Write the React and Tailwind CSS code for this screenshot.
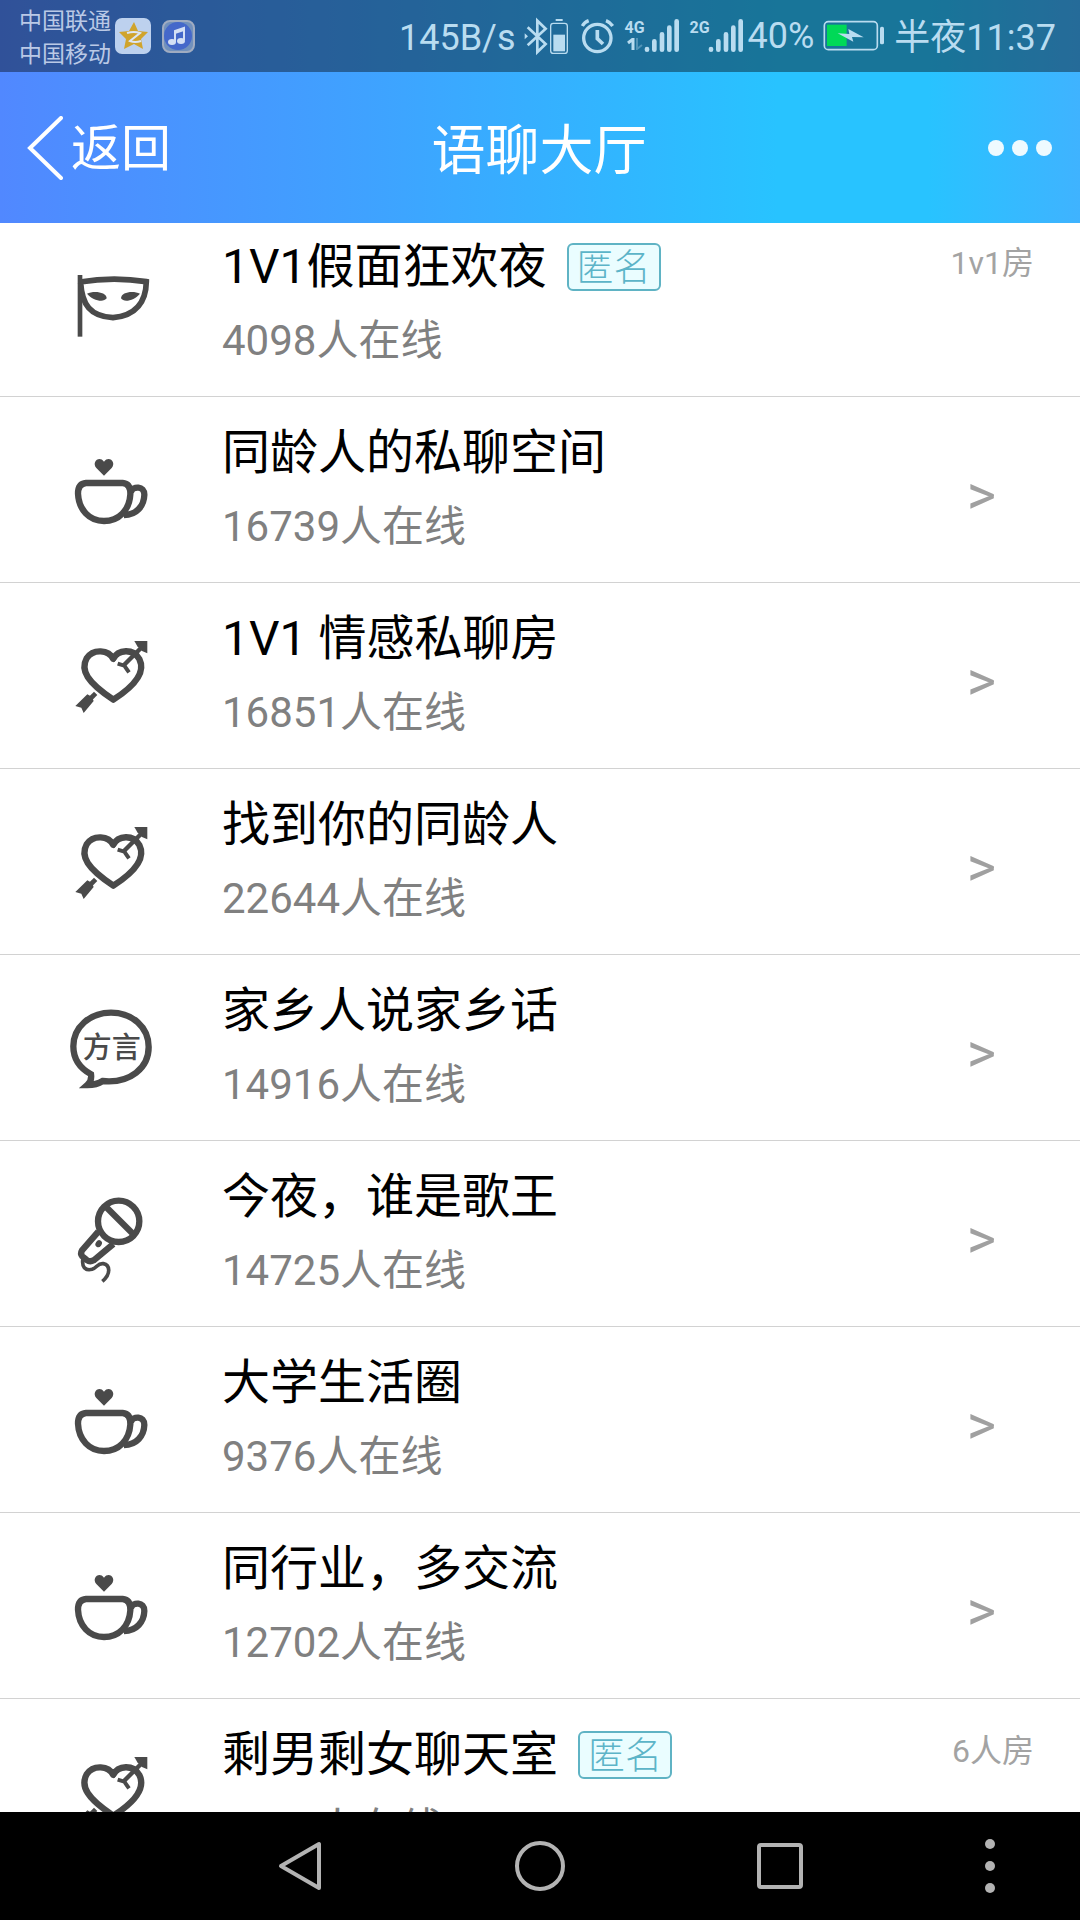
const rooms = [
  { icon: 'mask', title: '1V1假面狂欢夜', online: 4098, anonymous: true, type: '1v1房' },
  { icon: 'cup', title: '同龄人的私聊空间', online: 16739 },
  { icon: 'heart', title: '1V1 情感私聊房', online: 16851 },
  { icon: 'heart', title: '找到你的同龄人', online: 22644 },
  { icon: 'dialect', title: '家乡人说家乡话', online: 14916 },
  { icon: 'mic', title: '今夜，谁是歌王', online: 14725 },
  { icon: 'cup', title: '大学生活圈', online: 9376 },
  { icon: 'cup', title: '同行业，多交流', online: 12702 },
  { icon: 'heart', title: '剩男剩女聊天室', online: 8203, anonymous: true, type: '6人房' },
]

function MaskIcon() {
  return (
    <svg className="size-[130px] shrink-0" viewBox="30 54 390 390" fill="none" stroke="#4a4a4a" strokeWidth="14" aria-hidden="true">
      <path d="M120 162V347" />
      <path d="M120 183Q220 166 319 182C318 240 290 284 219 290C150 286 126 250 122 186" strokeWidth="17" />
      <path d="M141 218C160 208 200 212 200 232C190 246 158 238 141 218Z" fill="#4a4a4a" stroke="none" />
      <path d="M300 218C281 208 243 212 243 232C252 246 283 238 300 218Z" fill="#4a4a4a" stroke="none" />
    </svg>
  )
}

function CupIcon() {
  return (
    <svg className="size-[130px] shrink-0" viewBox="0 -18 390 390" fill="none" stroke="#4a4a4a" strokeWidth="19" aria-hidden="true">
      <path d="M162 134L139 111C124 94 147 72 162 92C177 72 200 94 185 111Z" fill="#4a4a4a" stroke="none" />
      <path d="M108 156H218Q242 158 241 190C238 238 206 270 162 270C118 270 86 236 84 188Q84 158 108 156Z" />
      <path d="M242 184C248 164 284 164 283 192C282 224 260 252 222 252" />
    </svg>
  )
}

function HeartIcon() {
  return (
    <svg className="size-[130px] shrink-0" viewBox="0 0 390 390" fill="none" stroke="#4a4a4a" strokeWidth="19" aria-hidden="true">
      <path d="M190 144C176 116 130 112 110 142C90 178 112 214 190 266C262 220 286 180 268 144C250 112 204 114 190 144Z" strokeLinejoin="round" />
      <path d="M197 157L212 140" stroke="#fff" strokeWidth="9" />
      <path d="M222 162L276 108" strokeWidth="13" />
      <path d="M203 158L223 164L237 184" strokeWidth="12" />
      <path d="M253 90H292V127L276 120L262 106Z" fill="#4a4a4a" stroke="none" />
      <path d="M137 247L114 270" strokeWidth="14" />
      <path d="M112 250L125 257L131 270L101 306L94 290L76 285Z" fill="#4a4a4a" stroke="none" />
    </svg>
  )
}

function DialectIcon() {
  return (
    <svg className="size-[130px] shrink-0" viewBox="0 6 390 390" fill="none" stroke="#4a4a4a" strokeWidth="19" aria-hidden="true">
      <path d="M123 280C90 262 70 232 70 196C70 138 120 95 183 95C247 95 296 138 296 198C296 260 242 308 158 300Q140 312 112 312Q126 300 123 280Z" />
      <text x="98" y="230" fontSize="87" fontWeight="500" fill="#4a4a4a" stroke="none" className="font-['Noto_Sans_CJK_SC',sans-serif]">方言</text>
    </svg>
  )
}

function MicIcon() {
  return (
    <svg className="size-[130px] shrink-0" viewBox="0 -6 390 390" fill="none" stroke="#4a4a4a" strokeWidth="19" aria-hidden="true">
      <circle cx="206" cy="151" r="62" />
      <path d="M166 106L250 190" />
      <path d="M145 182L96 238Q90 248 97 256L110 267Q120 274 131 268L190 219" />
      <ellipse cx="146" cy="218" rx="9" ry="11" transform="rotate(35 146 218)" fill="#4a4a4a" stroke="none" />
      <path d="M99 262C94 288 106 300 126 295C142 290 142 276 160 278C180 282 184 308 157 331" strokeWidth="11" />
    </svg>
  )
}

const icons = {
  mask: MaskIcon,
  cup: CupIcon,
  heart: HeartIcon,
  dialect: DialectIcon,
  mic: MicIcon,
}

function SignalBars() {
  return (
    <svg className="h-10 w-9" viewBox="789 48 108 120" stroke="currentColor" strokeWidth="14" strokeLinecap="round" aria-hidden="true">
      <path d="M798 147V149M820 124V149M843 103V149M865 83V149M887 64V149" />
    </svg>
  )
}

function StatusBar() {
  return (
    <div className="flex h-[72px] items-center justify-between bg-black/40 pr-6 pl-[19px] text-[#b9dcf0]">
      <div className="flex items-center">
        <div className="mr-1 pt-1 text-[23px] leading-[33px] text-[#bac9e6]">
          <p>中国联通</p>
          <p>中国移动</p>
        </div>
        <svg className="mr-[11px] size-9" viewBox="0 0 36 36" aria-hidden="true">
          <rect width="36" height="36" rx="7" fill="#bdd1ee" />
          <path d="M19 4L23 13L33 14L26 21L28 31L19 26L9 31L11 21L4 14L14 13Z" fill="#d0a42c" />
          <path d="M12 15Q19 13 25 15L15 23Q20 25 26 23" fill="none" stroke="#dce6f4" strokeWidth="2" />
        </svg>
        <svg className="size-[33px]" viewBox="0 0 33 33" aria-hidden="true">
          <rect x="1" y="1" width="31" height="31" rx="7" fill="#7191bd" stroke="#a0acc1" strokeWidth="2" />
          <circle cx="16" cy="16" r="14" fill="#4568ca" />
          <path d="M13 22V11L22 8V20" fill="none" stroke="#d4dff5" strokeWidth="2" />
          <path d="M13 11L22 8V11L13 14Z" fill="#d4dff5" />
          <ellipse cx="10" cy="22" rx="4" ry="3" fill="#d4dff5" />
          <ellipse cx="19" cy="21" rx="4" ry="3" fill="#d4dff5" />
        </svg>
      </div>

      <div className="flex items-center text-[36px] leading-none">
        <span className="pt-1">145B/s</span>
        {/* Bluetooth device and its battery */}
        <svg className="ml-2 h-10 w-11" viewBox="435 48 132 120" fill="none" stroke="currentColor" aria-hidden="true">
          <path d="M446 82L500 132L475 156V62L500 86L446 136" strokeWidth="8" />
          <path d="M437 100L447 109L437 118Z" fill="currentColor" stroke="none" />
          <rect x="515" y="70" width="50" height="90" rx="8" strokeWidth="4" />
          <rect x="530" y="57" width="21" height="6" fill="currentColor" stroke="none" />
          <rect x="523" y="104" width="35" height="50" fill="currentColor" stroke="none" />
        </svg>
        <svg className="ml-3 h-10 w-9" viewBox="600 48 108 120" fill="none" stroke="currentColor" strokeWidth="10" aria-hidden="true">
          <circle cx="652" cy="114" r="41" />
          <path d="M652 90V116L669 132" strokeWidth="11" />
          <path d="M607 78Q613 67 626 62M678 62Q691 67 698 78" strokeWidth="10" />
        </svg>
        <div className="ml-2.5 flex h-10 items-start">
          <div className="flex w-[18px] flex-col items-center pt-0.5 text-[16px] leading-5 font-bold">
            <span>4G</span>
            <svg className="h-3 w-4" viewBox="0 0 16 12" fill="none" stroke="currentColor" aria-hidden="true">
              <path d="M1 5L6 1V12" strokeWidth="3" />
              <path d="M10 0V11L15 7" strokeWidth="2" opacity="0.35" />
            </svg>
          </div>
          <SignalBars />
        </div>
        <div className="ml-2.5 flex h-10 items-start">
          <span className="w-[18px] pt-0.5 text-center text-[16px] leading-5 font-bold">2G</span>
          <SignalBars />
        </div>
        <span className="ml-1">40%</span>
        <svg className="ml-2 h-10 w-16" viewBox="306 48 192 120" aria-hidden="true">
          <rect x="313" y="65" width="159" height="84" rx="12" fill="none" stroke="currentColor" strokeWidth="5" />
          <rect x="480" y="80" width="12" height="53" rx="5" fill="currentColor" />
          <rect x="321" y="74" width="59" height="64" fill="#00d957" />
          <path d="M353 100L388 102L385 87L431 112L396 111L400 125Z" fill="currentColor" />
        </svg>
        <span className="ml-2 pt-1">半夜11:37</span>
      </div>
    </div>
  )
}

function Header() {
  return (
    <header className="grid h-[151px] grid-cols-[1fr_auto_1fr] items-center pr-7 pl-[27px] text-white">
      <button type="button" className="flex items-center gap-2 justify-self-start text-[50px] leading-none">
        <svg className="h-16 w-9" viewBox="0 0 36 64" fill="none" stroke="currentColor" strokeWidth="4" strokeLinecap="round" aria-hidden="true">
          <path d="M34 2L3 32L34 62" />
        </svg>
        <span className="pt-0.5">返回</span>
      </button>
      <h1 className="pt-2 text-[54px] leading-none">语聊大厅</h1>
      <button type="button" aria-label="更多" className="flex gap-2 justify-self-end">
        <span className="size-4 rounded-full bg-[#eefaff]" />
        <span className="size-4 rounded-full bg-[#eefaff]" />
        <span className="size-4 rounded-full bg-[#eefaff]" />
      </button>
    </header>
  )
}

function RoomRow({ room }) {
  const Icon = icons[room.icon]

  return (
    <li>
      <a href="#" className="flex h-[186px] items-start border-b border-[#d2d2d2] pl-[50px]">
        <div className="mr-[42px] flex h-full items-center">
          <Icon />
        </div>
        <div className="flex-1 pt-[26px]">
          <div className="flex items-center gap-5">
            <h2 className="text-[48px] leading-[60px] text-black">{room.title}</h2>
            {room.anonymous && (
              <span className="flex h-12 items-center rounded-md border-2 border-[#5fb3c4] bg-[#eafdff] px-2 pt-0.5 text-[37px] leading-none font-light text-[#5cb4c8]">
                匿名
              </span>
            )}
          </div>
          <p className="mt-[14px] text-[42px] leading-[60px] text-[#808080]">{room.online}人在线</p>
        </div>
        {room.type ? (
          <span className="pt-7 pr-[46px] text-[32px] leading-[48px] text-[#a3a3a3]">{room.type}</span>
        ) : (
          <span className="self-center pt-2.5 pr-[84px] text-[56px] leading-none text-[#a0a0a0]">&gt;</span>
        )}
      </a>
    </li>
  )
}

function NavBar() {
  return (
    <nav className="grid h-[108px] shrink-0 grid-cols-[3fr_4fr_4fr_4fr_3fr] items-center justify-items-center bg-black text-[#b3b3b3]">
      <span />
      <button type="button" aria-label="返回">
        <svg className="h-[50px] w-11" viewBox="0 0 44 50" fill="none" stroke="currentColor" strokeWidth="4" strokeLinejoin="round" aria-hidden="true">
          <path d="M41 3V47L3 25Z" />
        </svg>
      </button>
      <button type="button" aria-label="主屏幕" className="size-[50px] rounded-full border-4 border-current" />
      <button type="button" aria-label="最近任务" className="size-[46px] rounded-sm border-4 border-current" />
      <button type="button" aria-label="菜单" className="flex flex-col gap-3">
        <span className="size-2.5 rounded-full bg-current" />
        <span className="size-2.5 rounded-full bg-current" />
        <span className="size-2.5 rounded-full bg-current" />
      </button>
    </nav>
  )
}

function App() {
  return (
    <div className="flex h-screen flex-col overflow-hidden bg-white font-[Roboto,'Noto_Sans_CJK_SC',sans-serif]">
      <div className="shrink-0 bg-[linear-gradient(90deg,#5188ff_0%,#3fa2ff_34%,#28c3ff_72%,#28c3ff_86%,#3fb3ff_100%)]">
        <StatusBar />
        <Header />
      </div>

      {/* Room list, scrolled a little past its top */}
      <main className="min-h-0 flex-1 overflow-hidden">
        <ul className="-mt-3">
          {rooms.map((room) => (
            <RoomRow key={room.title} room={room} />
          ))}
        </ul>
      </main>

      <NavBar />
    </div>
  )
}

export default App
